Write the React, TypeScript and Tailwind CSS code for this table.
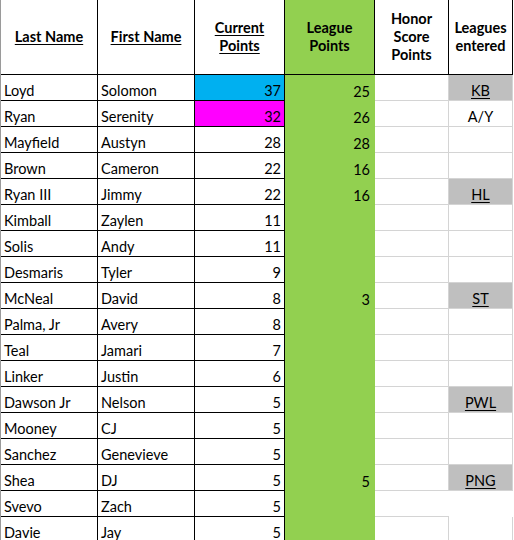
import React from "react";

type Row = {
  last: string;
  first: string;
  cur: number;
  curBg?: string;
  league?: number;
  tag?: string;
  tagGray?: boolean;
  tagUnderline?: boolean;
  leaguesPlain?: boolean;
};

const rows: Row[] = [
  { last: "Loyd", first: "Solomon", cur: 37, curBg: "bg-[#00b0f0]", league: 25, tag: "KB", tagGray: true, tagUnderline: true },
  { last: "Ryan", first: "Serenity", cur: 32, curBg: "bg-[#ff00ff]", league: 26, tag: "A/Y" },
  { last: "Mayfield", first: "Austyn", cur: 28, league: 28 },
  { last: "Brown", first: "Cameron", cur: 22, league: 16 },
  { last: "Ryan III", first: "Jimmy", cur: 22, league: 16, tag: "HL", tagGray: true, tagUnderline: true },
  { last: "Kimball", first: "Zaylen", cur: 11 },
  { last: "Solis", first: "Andy", cur: 11 },
  { last: "Desmaris", first: "Tyler", cur: 9 },
  { last: "McNeal", first: "David", cur: 8, league: 3, tag: "ST", tagGray: true, tagUnderline: true },
  { last: "Palma, Jr", first: "Avery", cur: 8 },
  { last: "Teal", first: "Jamari", cur: 7 },
  { last: "Linker", first: "Justin", cur: 6 },
  { last: "Dawson Jr", first: "Nelson", cur: 5, tag: "PWL", tagGray: true, tagUnderline: true },
  { last: "Mooney", first: "CJ", cur: 5 },
  { last: "Sanchez", first: "Genevieve", cur: 5 },
  { last: "Shea", first: "DJ", cur: 5, league: 5, tag: "PNG", tagGray: true, tagUnderline: true },
  { last: "Svevo", first: "Zach", cur: 5, leaguesPlain: true },
  { last: "Davie", first: "Jay", cur: 5 },
];

const font = { fontFamily: "Lato, 'Liberation Sans', sans-serif" };

export default function App() {
  return (
    <div className="w-[514px] h-[540px] overflow-hidden bg-white text-black text-[14.5px]" style={font}>
      <div className="border-l border-[#9a9a9a] w-[513px]">
        {/* Header */}
        <div className="grid grid-cols-[97px_97px_90px_90px_74px_64px] h-[75px] border-b border-black font-bold leading-[18px] text-[14.5px]">
          <div className="border-r border-black flex items-center justify-center">
            <span className="underline underline-offset-2">Last Name</span>
          </div>
          <div className="border-r border-black flex items-center justify-center">
            <span className="underline underline-offset-2">First Name</span>
          </div>
          <div className="border-r border-black flex flex-col items-center justify-center">
            <span className="underline underline-offset-2">Current</span>
            <span className="underline underline-offset-2">Points</span>
          </div>
          <div className="border-r border-black bg-[#92d050] flex flex-col items-center justify-center">
            <span>League</span>
            <span>Points</span>
          </div>
          <div className="border-r border-black flex flex-col items-center justify-center">
            <span>Honor</span>
            <span>Score</span>
            <span>Points</span>
          </div>
          <div className="border-r border-black flex flex-col items-center justify-center">
            <span>Leagues</span>
            <span>entered</span>
          </div>
        </div>
        {/* Rows */}
        {rows.map((r, i) => (
          <div key={i} className="grid grid-cols-[97px_97px_90px_90px_74px_64px] h-[26px] leading-[18px]">
            <div className="border-r border-b border-black flex items-end pl-[3px]">{r.last}</div>
            <div className="border-r border-b border-black flex items-end pl-[3px]">{r.first}</div>
            <div className={`border-r border-b border-black flex items-end justify-end pr-[3px] ${r.curBg ?? ""}`}>{r.cur}</div>
            <div className="bg-[#92d050] flex items-end justify-end pr-[5px]">{r.league ?? ""}</div>
            <div className={`border-b border-[#d4d4d4] ${r.leaguesPlain ? "" : "border-r"}`}></div>
            <div
              className={`flex items-end justify-center ${
                r.leaguesPlain ? "" : "border-r border-b border-[#d4d4d4]"
              } ${r.tagGray ? "bg-[#bfbfbf]" : ""}`}
            >
              <span className={r.tagUnderline ? "underline underline-offset-2" : ""}>{r.tag ?? ""}</span>
            </div>
          </div>
        ))}
      </div>
    </div>
  );
}
